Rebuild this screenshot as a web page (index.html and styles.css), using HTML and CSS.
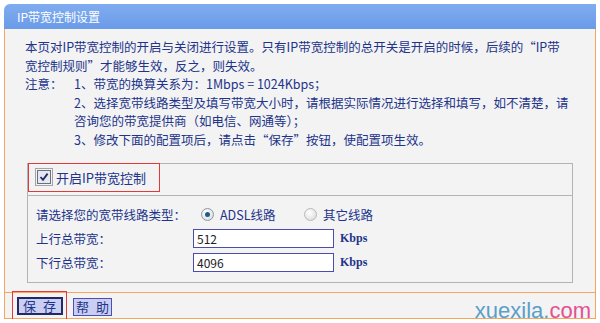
FILE: index.html
```html
<!DOCTYPE html>
<html lang="zh-CN">
<head>
  <meta charset="UTF-8">
  <title>IP带宽控制设置</title>
  <link rel="stylesheet" href="styles.css">
</head>
<body>

  <div class="panel">
    <div class="panel-title">IP带宽控制设置</div>

    <div class="panel-body">
      <div class="intro">
        <p>本页对IP带宽控制的开启与关闭进行设置。只有IP带宽控制的总开关是开启的时候，后续的“IP带宽控制规则”才能够生效，反之，则失效。</p>
        <div class="notes">
          <span class="notes-label">注意：</span>
          <div class="notes-list">
            <p>1、带宽的换算关系为：1Mbps = 1024Kbps；</p>
            <p>2、选择宽带线路类型及填写带宽大小时，请根据实际情况进行选择和填写，如不清楚，请咨询您的带宽提供商（如电信、网通等）；</p>
            <p>3、修改下面的配置项后，请点击“保存”按钮，使配置项生效。</p>
          </div>
        </div>
      </div>

      <div class="box">
        <div class="box-head">
          <label class="switch">
            <span class="check">
              <svg width="18" height="18" viewBox="0 0 18 18">
                <rect x="0.5" y="0.5" width="17" height="17" fill="none" stroke="#555" stroke-dasharray="1 1"/>
                <rect x="2.5" y="2.5" width="13" height="13" fill="#e6e8f0" stroke="#6b6f86"/>
                <path d="M5.5 9 L8 11.8 L12.6 5.6" fill="none" stroke="#1f2a6a" stroke-width="1.8"/>
              </svg>
            </span>
            开启IP带宽控制
          </label>
        </div>

        <div class="box-rows">
          <span class="row-label">请选择您的宽带线路类型：</span>
          <div class="radios">
            <span class="radio on"></span><span class="radio-text">ADSL线路</span>
            <span class="radio"></span><span class="radio-text">其它线路</span>
          </div>

          <span class="row-label">上行总带宽：</span>
          <div class="field"><input type="text" value="512"><span class="unit">Kbps</span></div>

          <span class="row-label">下行总带宽：</span>
          <div class="field"><input type="text" value="4096"><span class="unit">Kbps</span></div>
        </div>
      </div>

      <div class="actions">
        <span class="mark"><button class="btn btn-main">保 存</button></span>
        <button class="btn">帮 助</button>
        <div class="watermark">xuexila.<span>com</span></div>
      </div>
    </div>
  </div>

</body>
</html>
```

FILE: styles.css
```css
body {
  margin: 0;
  background: #ffffff;
  font-family: "Noto Sans CJK SC", sans-serif;
  color: #22348a;
}
.panel {
  margin: 4px 4px 0 4px;
  width: 592px;
}
.panel-title {
  height: 25px;
  line-height: 25px;
  padding-left: 13px;
  font-size: 12px;
  color: #ffffff;
  background: linear-gradient(#80acf0, #6a9be8);
  border-top-left-radius: 6px;
}
.panel-body {
  background: #f3f3f3;
  border-left: 1px solid #f6a55c;
  border-right: 1px solid #f6a55c;
  border-bottom: 1px solid #f6a55c;
  height: 289px;
}
.intro {
  padding: 9px 0 0 20px;
  width: 539px;
  font-size: 12.5px;
  line-height: 18.6px;
}
.intro p {
  margin: 0;
}
.notes {
  display: flex;
}
.notes-label {
  width: 49px;
  flex-shrink: 0;
}
.notes-list {
  width: 500px;
  flex-shrink: 0;
}
.box {
  margin: 13px 0 0 22px;
  width: 544px;
  border: 1px solid #b4b4b4;
  font-size: 12.5px;
}
.box-head {
  height: 31px;
  border-bottom: 1px solid #b4b4b4;
}
.switch {
  display: inline-flex;
  align-items: center;
  gap: 3px;
  margin-top: -1px;
  padding-left: 6px;
  box-sizing: border-box;
  width: 132px;
  height: 29px;
  border: 1px solid #e23a3a;
  font-size: 13px;
}
.check svg {
  display: block;
}
.box-rows {
  display: grid;
  grid-template-columns: 157px auto;
  grid-auto-rows: 24px;
  align-items: center;
  padding: 7px 0 7px 8px;
}
.radios {
  display: flex;
  align-items: center;
}
.radio {
  width: 11px;
  height: 11px;
  margin-left: 8px;
  border-radius: 50%;
  border: 1px solid #b9b9b9;
  background: radial-gradient(circle at 40% 35%, #ffffff, #d6d6d6);
  position: relative;
}
.radio.on {
  border-color: #8a9aa8;
}
.radio.on::after {
  content: "";
  position: absolute;
  left: 3px;
  top: 3px;
  width: 5px;
  height: 5px;
  border-radius: 50%;
  background: #1f5a86;
}
.radio-text {
  margin-left: 6px;
  width: 76px;
}
.field {
  display: flex;
  align-items: center;
}
.field input {
  width: 141px;
  height: 19px;
  box-sizing: border-box;
  border: 1px solid #4a4cae;
  background: #ffffff;
  padding: 0 3px;
  font-family: "Noto Sans CJK SC", sans-serif;
  font-size: 12px;
  color: #222222;
}
.unit {
  margin-left: 6px;
  font-family: "Liberation Serif", serif;
  font-size: 12px;
  font-weight: bold;
}
.actions {
  position: relative;
  display: flex;
  align-items: center;
  margin-top: 9px;
  height: 28px;
  border-top: 1px solid #f6a55c;
  padding-left: 7px;
}
.mark {
  display: inline-flex;
  align-items: center;
  justify-content: center;
  margin-top: -2px;
  width: 55px;
  height: 29px;
  box-sizing: border-box;
  border: 1px solid #e23a3a;
}
.btn {
  height: 18px;
  padding: 0 2px;
  font-family: "Noto Sans CJK SC", sans-serif;
  font-size: 13px;
  line-height: 14px;
  word-spacing: 4px;
  color: #22348a;
  background: #c9cef2;
  border: 1px solid #4b4fae;
  margin-left: 6px;
}
.btn-main {
  width: 46px;
  margin-left: 0;
  border: 2px solid #222a66;
}
.watermark {
  position: absolute;
  right: 4px;
  bottom: -3px;
  font-family: "Liberation Sans", sans-serif;
  font-size: 22px;
  color: #5b9ec8;
}
.watermark span {
  color: #e35191;
}
```
